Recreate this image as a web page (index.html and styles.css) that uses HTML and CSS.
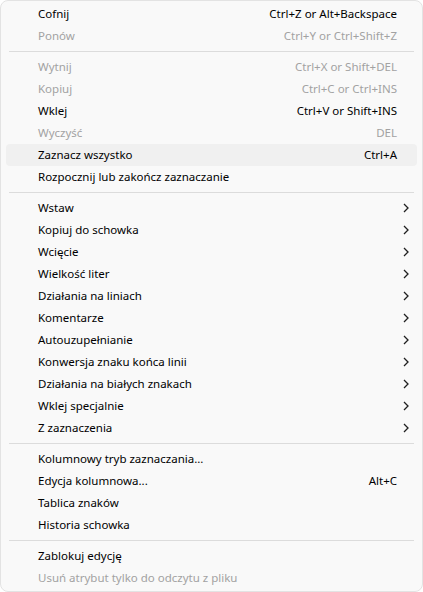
FILE: index.html
```html
<!DOCTYPE html>
<html lang="pl">
<head>
<meta charset="utf-8">
<title>Menu</title>
<link rel="stylesheet" href="styles.css">
</head>
<body>
<div class="menu">
  <div class="item"><span class="label">Cofnij</span><span class="key">Ctrl+Z or Alt+Backspace</span><span></span></div>
  <div class="item disabled"><span class="label">Ponów</span><span class="key">Ctrl+Y or Ctrl+Shift+Z</span><span></span></div>
  <div class="sep"></div>
  <div class="item disabled"><span class="label">Wytnij</span><span class="key">Ctrl+X or Shift+DEL</span><span></span></div>
  <div class="item disabled"><span class="label">Kopiuj</span><span class="key">Ctrl+C or Ctrl+INS</span><span></span></div>
  <div class="item"><span class="label">Wklej</span><span class="key">Ctrl+V or Shift+INS</span><span></span></div>
  <div class="item disabled"><span class="label">Wyczyść</span><span class="key">DEL</span><span></span></div>
  <div class="item hover"><span class="label">Zaznacz wszystko</span><span class="key">Ctrl+A</span><span></span></div>
  <div class="item"><span class="label">Rozpocznij lub zakończ zaznaczanie</span><span class="key"></span><span></span></div>
  <div class="sep"></div>
  <div class="item"><span class="label">Wstaw</span><span class="key"></span><svg class="arrow" viewBox="0 0 6 10"><path d="M1 1l4 4-4 4"/></svg></div>
  <div class="item"><span class="label">Kopiuj do schowka</span><span class="key"></span><svg class="arrow" viewBox="0 0 6 10"><path d="M1 1l4 4-4 4"/></svg></div>
  <div class="item"><span class="label">Wcięcie</span><span class="key"></span><svg class="arrow" viewBox="0 0 6 10"><path d="M1 1l4 4-4 4"/></svg></div>
  <div class="item"><span class="label">Wielkość liter</span><span class="key"></span><svg class="arrow" viewBox="0 0 6 10"><path d="M1 1l4 4-4 4"/></svg></div>
  <div class="item"><span class="label">Działania na liniach</span><span class="key"></span><svg class="arrow" viewBox="0 0 6 10"><path d="M1 1l4 4-4 4"/></svg></div>
  <div class="item"><span class="label">Komentarze</span><span class="key"></span><svg class="arrow" viewBox="0 0 6 10"><path d="M1 1l4 4-4 4"/></svg></div>
  <div class="item"><span class="label">Autouzupełnianie</span><span class="key"></span><svg class="arrow" viewBox="0 0 6 10"><path d="M1 1l4 4-4 4"/></svg></div>
  <div class="item"><span class="label">Konwersja znaku końca linii</span><span class="key"></span><svg class="arrow" viewBox="0 0 6 10"><path d="M1 1l4 4-4 4"/></svg></div>
  <div class="item"><span class="label">Działania na białych znakach</span><span class="key"></span><svg class="arrow" viewBox="0 0 6 10"><path d="M1 1l4 4-4 4"/></svg></div>
  <div class="item"><span class="label">Wklej specjalnie</span><span class="key"></span><svg class="arrow" viewBox="0 0 6 10"><path d="M1 1l4 4-4 4"/></svg></div>
  <div class="item"><span class="label">Z zaznaczenia</span><span class="key"></span><svg class="arrow" viewBox="0 0 6 10"><path d="M1 1l4 4-4 4"/></svg></div>
  <div class="sep"></div>
  <div class="item"><span class="label">Kolumnowy tryb zaznaczania...</span><span class="key"></span><span></span></div>
  <div class="item"><span class="label">Edycja kolumnowa...</span><span class="key">Alt+C</span><span></span></div>
  <div class="item"><span class="label">Tablica znaków</span><span class="key"></span><span></span></div>
  <div class="item"><span class="label">Historia schowka</span><span class="key"></span><span></span></div>
  <div class="sep"></div>
  <div class="item"><span class="label">Zablokuj edycję</span><span class="key"></span><span></span></div>
  <div class="item disabled"><span class="label">Usuń atrybut tylko do odczytu z pliku</span><span class="key"></span><span></span></div>
</div>
</body>
</html>
```
FILE: styles.css
```css
html, body {
  margin: 0;
  padding: 0;
  background: #ffffff;
}
body {
  font-family: "Noto Sans", "Open Sans", sans-serif;
  font-size: 11.5px;
  color: #000;
}
.menu {
  box-sizing: border-box;
  width: 423px;
  height: 592px;
  background: #f9f9f9;
  border: 1px solid #e3e3e3;
  border-radius: 8px;
  padding: 2px 0;
}
.item {
  box-sizing: border-box;
  display: grid;
  grid-template-columns: 1fr auto 20px;
  align-items: center;
  height: 22px;
  margin: 0 5px;
  padding: 0 0 1px 32px;
  border-radius: 4px;
  white-space: nowrap;
}
.item.hover {
  background: #f0f0f0;
}
.item.disabled {
  color: #a2a2a2;
}
.key {
  text-align: right;
}
.arrow {
  width: 6px;
  height: 10px;
  margin-left: 6px;
  fill: none;
  stroke: #1f1f1f;
  stroke-width: 1.3;
}
.sep {
  height: 1px;
  margin: 4px 8px;
  background: #dcdcdc;
}
```
